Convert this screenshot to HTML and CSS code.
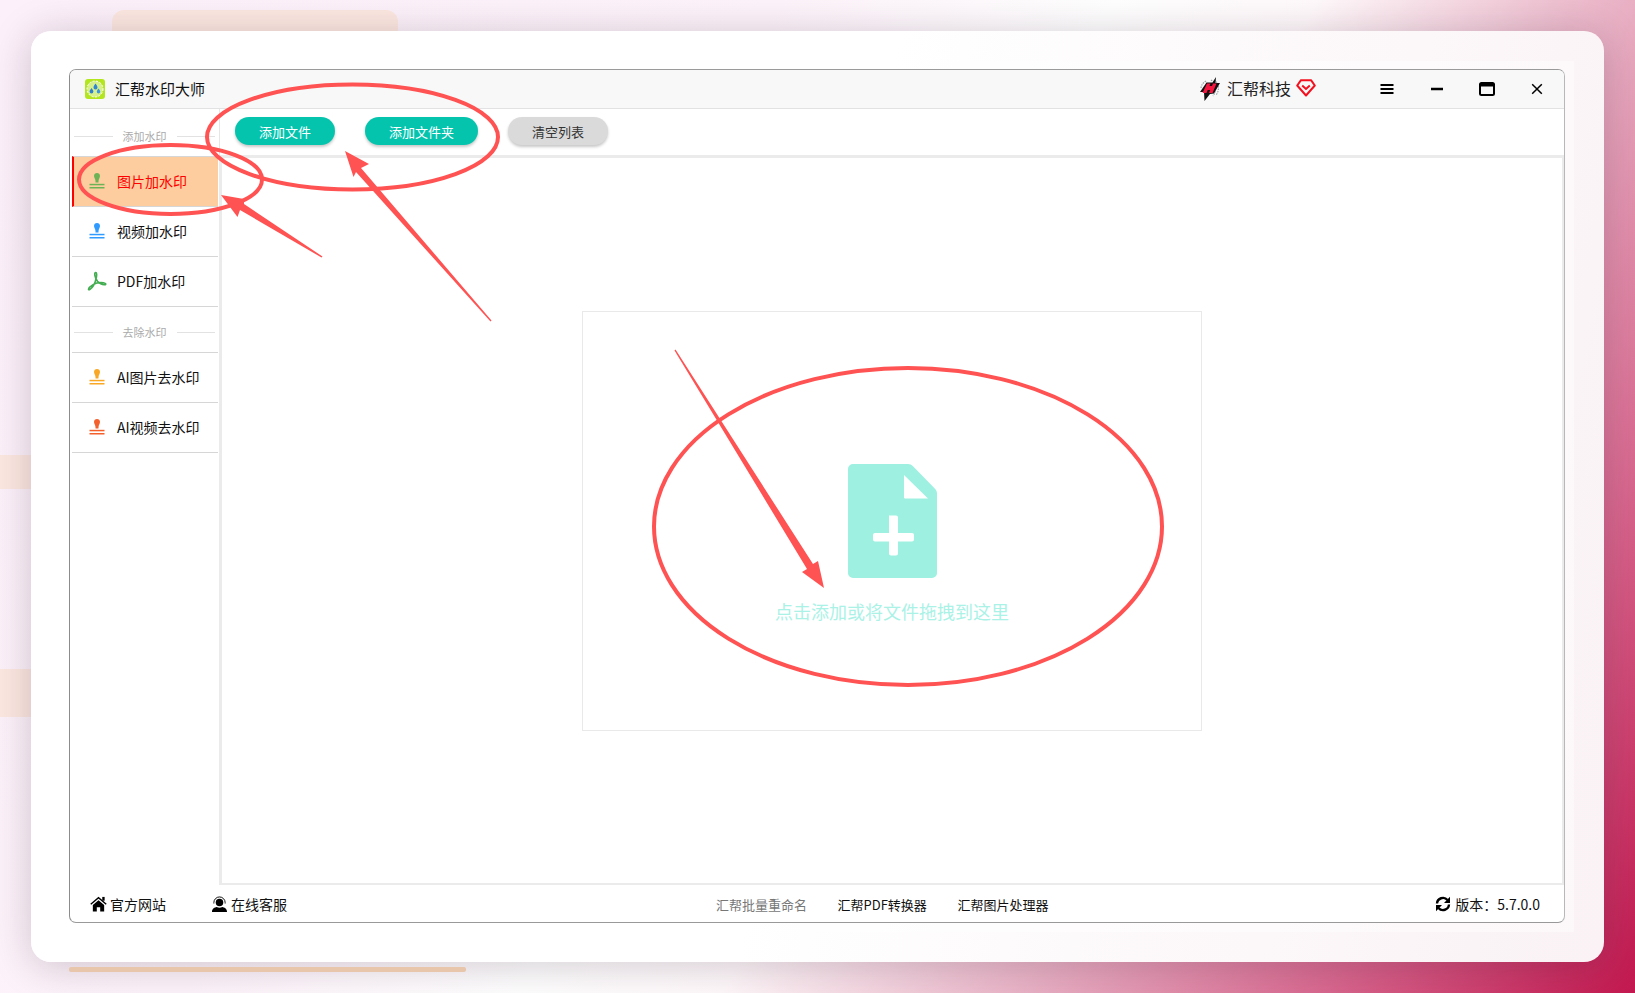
FILE: index.html
```html
<!DOCTYPE html>
<html lang="zh-CN">
<head>
<meta charset="utf-8">
<title>汇帮水印大师</title>
<link rel="stylesheet" href="styles.css">
</head>
<body>
<svg width="0" height="0" class="defs">
  <defs>
    <symbol id="stamp" viewBox="0 0 16 16">
      <path fill="currentColor" d="M8 0C6.2 0 5 1.3 5 3c0 1.900 1.500 2.800 1.500 5.300V9.500h3V8.300C9.500 5.800 11 4.900 11 3c0-1.700-1.200-3-3-3z"/>
      <rect fill="currentColor" x="0.500" y="10.800" width="15" height="1.500"/>
      <rect fill="currentColor" x="0.500" y="14" width="15" height="1.500"/>
    </symbol>
  </defs>
</svg>
<div class="decor decor-top"></div>
<div class="decor decor-left-a"></div>
<div class="decor decor-left-b"></div>
<div class="decor decor-bottom"></div>

<main class="card">
  <div class="frame">
    <div class="window">
      <header class="titlebar">
        <svg class="app-icon" viewBox="0 0 20 20">
          <rect width="20" height="20" rx="3" fill="#b3e61f"/>
          <circle cx="10" cy="10" r="8" fill="#d7f08c" stroke="#fff" stroke-width="1" stroke-dasharray="2 1.500"/>
          <path fill="#2f86d6" d="M10.500 4.500c1.300 1.900 2 2.900 2 3.900a2 2 0 0 1-4 0c0-1 .7-2 2-3.900z"/>
          <path fill="#2f7fd0" d="M6.500 9c1.200 1.700 1.900 2.600 1.900 3.600a1.900 1.900 0 0 1-3.800 0c0-1 .7-1.900 1.900-3.600z"/>
          <path fill="#3a95e0" d="M13.500 9.500c1.100 1.500 1.700 2.400 1.700 3.200a1.700 1.700 0 0 1-3.400 0c0-.8.6-1.700 1.700-3.200z"/>
        </svg>
        <span class="app-name">汇帮水印大师</span>
        <div class="brand">
          <svg class="brand-logo" viewBox="0 0 22 24">
            <path fill="none" stroke="#9aa5a5" stroke-width="1.200" stroke-dasharray="1.500 1" d="M15 3c5 3 6 10 2 15M12 3c5 3 6 11 2 16M7 4C4 6 2 8 2 12"/>
            <path fill="#111" d="M17 0l-3.500 5.500h-6L1 15h4L5.500 24l5.500-7 4-.5L21 6h-4.500z"/>
            <path fill="#f5163f" d="M8 6.500h3.500L10.500 9H13l1-2.500h3.500L13.500 16H10l1.200-3H8.700L7.500 16H3.500z"/>
          </svg>
          <span class="brand-name">汇帮科技</span>
          <svg class="brand-gem" viewBox="0 0 20 18">
            <path fill="none" stroke="#f4101e" stroke-width="2" stroke-linejoin="round" d="M5 1.200h10l3.800 5.300L10 16.500 1.200 6.500z"/>
            <path fill="none" stroke="#f4101e" stroke-width="2" d="M6.200 6.500L10 10l3.800-3.500"/>
          </svg>
        </div>
        <div class="win-controls">
          <button class="win-btn" type="button" aria-label="菜单">
            <svg width="14" height="12" viewBox="0 0 14 12"><path stroke="#000" stroke-width="2" d="M0.500 2h13M0.500 6h13M0.500 10h13"/></svg>
          </button>
          <button class="win-btn" type="button" aria-label="最小化">
            <svg width="14" height="12" viewBox="0 0 14 12"><path stroke="#000" stroke-width="2.400" d="M1 6h12"/></svg>
          </button>
          <button class="win-btn" type="button" aria-label="最大化">
            <svg width="16" height="14" viewBox="0 0 16 14"><rect x="1" y="1" width="14" height="12" rx="1.500" fill="none" stroke="#000" stroke-width="2"/><rect x="1" y="1" width="14" height="3.500" fill="#000"/></svg>
          </button>
          <button class="win-btn" type="button" aria-label="关闭">
            <svg width="12" height="12" viewBox="0 0 12 12"><path stroke="#000" stroke-width="1.500" d="M1.200 1.200l9.600 9.600M10.800 1.200l-9.600 9.600"/></svg>
          </button>
        </div>
      </header>

      <div class="body">
        <nav class="sidebar">
          <div class="sep sep-first"><span>添加水印</span></div>
          <a class="item item-top item-active">
            <span class="item-icon c-green"><svg class="stamp"><use href="#stamp"/></svg></span>图片加水印
          </a>
          <a class="item">
            <span class="item-icon c-blue"><svg class="stamp"><use href="#stamp"/></svg></span>视频加水印
          </a>
          <a class="item">
            <span class="item-icon">
              <svg class="pdf" viewBox="0 0 20 20"><path fill="none" stroke="#43ad52" stroke-width="1.600" stroke-linejoin="round" d="M8.800 1.500C7 1.500 7.500 6.500 10.500 10.200 13 13 16.500 14 18.500 13.600 19.500 13 18 11.500 14 11.500 8 11.500 2 15.500 1.500 18.200 1.500 19.500 4 18.500 6.500 14.500 9 10.500 10.800 1.500 8.800 1.500z"/></svg>
            </span>PDF加水印
          </a>
          <div class="sep"><span>去除水印</span></div>
          <a class="item item-top">
            <span class="item-icon c-orange"><svg class="stamp"><use href="#stamp"/></svg></span>AI图片去水印
          </a>
          <a class="item">
            <span class="item-icon c-red"><svg class="stamp"><use href="#stamp"/></svg></span>AI视频去水印
          </a>
        </nav>

        <section class="content">
          <div class="toolbar">
            <button class="btn btn-primary btn-file" type="button">添加文件</button>
            <button class="btn btn-primary btn-folder" type="button">添加文件夹</button>
            <button class="btn btn-muted btn-file" type="button">清空列表</button>
          </div>
          <div class="panel">
            <div class="dropzone">
              <svg class="file-icon" viewBox="0 0 89 114">
                <path fill="#9ef0e1" d="M5 0h55c2 0 3.500.7 5 2.200l21.500 22c1.700 1.700 2.500 3.300 2.500 5.300V109a5 5 0 0 1-5 5H5a5 5 0 0 1-5-5V5a5 5 0 0 1 5-5z"/>
                <path fill="#fff" d="M56 11l24 23.500H57a1 1 0 0 1-1-1z"/>
                <path fill="#fff" d="M41 51.500h7a2 2 0 0 1 2 2V69h14a2 2 0 0 1 2 2v4.500a2 2 0 0 1-2 2H50v12a2 2 0 0 1-2 2h-5a2 2 0 0 1-2-2v-12H27a2 2 0 0 1-2-2V71a2 2 0 0 1 2-2h14z"/>
              </svg>
              <p class="drop-text">点击添加或将文件拖拽到这里</p>
            </div>
          </div>
        </section>
      </div>

      <footer class="footer">
        <div class="foot-left">
          <a class="foot-link">
            <svg class="foot-icon" viewBox="0 0 18 16"><path fill="none" stroke="#000" stroke-width="1.500" d="M.8 8.200L9 1.300l8.200 6.900"/><rect x="13" y=".5" width="2.500" height="4"/><path d="M3 9l6-5 6 5v7h-4.200v-4.500H7.200V16H3z"/></svg>官方网站
          </a>
          <a class="foot-link">
            <svg class="foot-icon" viewBox="0 0 17 17"><path fill="none" stroke="#000" stroke-width="1" d="M2.500 8V7a6 6 0 0 1 12 0v1"/><circle cx="8.500" cy="7" r="4"/><path d="M0.500 17c0-3.500 3-5 5-5.300 1.800 1 4.200 1 6 0 2 .3 5 1.800 5 5.300z"/></svg>在线客服
          </a>
        </div>
        <div class="foot-center">
          <a class="foot-tool foot-tool-muted">汇帮批量重命名</a>
          <a class="foot-tool">汇帮PDF转换器</a>
          <a class="foot-tool">汇帮图片处理器</a>
        </div>
        <div class="foot-version">
          <svg class="foot-icon refresh" viewBox="0 0 16 16"><path fill="none" stroke="#000" stroke-width="2.400" d="M2 7.500A6 6 0 0 1 12.500 4M14 8.500A6 6 0 0 1 3.500 12"/><path d="M15 .8V7H9zM1 15.200V9h6z"/></svg>版本：5.7.0.0
        </div>
      </footer>
    </div>
  </div>
</main>

<svg class="annotations" viewBox="0 0 1635 993" aria-hidden="true">
  <g class="rings">
    <ellipse cx="352.500" cy="137" rx="145.500" ry="52.500"/>
    <ellipse cx="170.500" cy="179.500" rx="91.500" ry="34.500"/>
    <ellipse cx="908" cy="526.500" rx="254" ry="158.500"/>
  </g>
  <g class="arrows">
    <polygon points="322.500,256.500 321.500,257.500 240,210 237.500,217 221,195 244,199 244,204"/>
    <polygon points="491.500,320.500 490.500,321.500 356,172 353.500,177 345,151 369,164 361,168"/>
    <polygon points="675.500,349.500 674.500,350.500 807,569 802,572 824,588 818,561 813,564"/>
  </g>
</svg>
</body>
</html>
```
FILE: styles.css
```css
* { box-sizing: border-box; }

html, body { margin: 0; padding: 0; }

body {
  position: relative;
  width: 1635px;
  height: 993px;
  overflow: hidden;
  font-family: "Noto Sans CJK SC", "Liberation Sans", sans-serif;
  color: #000;
  background: linear-gradient(121deg, #fcf0fa 0%, #fdf3fa 35%, #fff 50%, #fff9fb 59%, #e9b0c4 73%, #d9688f 86%, #c2184f 100%);
}

.defs { position: absolute; }

.decor { position: absolute; background: #fde8e1; }
.decor-top { left: 112px; top: 10px; width: 286px; height: 40px; border-radius: 12px; }
.decor-left-a { left: 0; top: 455px; width: 40px; height: 34px; }
.decor-left-b { left: 0; top: 669px; width: 40px; height: 48px; }
.decor-bottom { left: 69px; top: 967px; width: 397px; height: 5px; border-radius: 2px; background: #e8c6ab; z-index: 2; }

.card {
  position: relative;
  z-index: 1;
  display: flex;
  width: 1573px;
  height: 931px;
  margin: 31px 0 0 31px;
  padding: 30px;
  border-radius: 20px;
  background: linear-gradient(100deg, #fff 0%, #fff 50%, #faf2f5 100%);
  box-shadow: 0 4px 40px rgba(40, 20, 40, .22);
}

.frame {
  flex: 1;
  display: flex;
  padding: 8px 9px 9px 8px;
  background: rgba(255, 255, 255, .45);
}

.window {
  flex: 1;
  display: flex;
  flex-direction: column;
  overflow: hidden;
  border: 1px solid #8c8c8c;
  border-top-color: #9a9a9a;
  border-right-color: #b8b8b8;
  border-bottom-color: #999;
  border-radius: 7px;
  background: #fff;
}

.titlebar {
  flex: 0 0 39px;
  display: flex;
  align-items: center;
  padding-left: 15px;
  border-bottom: 1px solid #e2e2e2;
  background: #f8f8f8;
}

.app-icon { width: 20px; height: 20px; margin-right: 10px; }
.app-name { font-size: 15px; color: #111; padding-bottom: 2px; }

.brand { display: flex; align-items: center; margin-left: auto; }
.brand-logo { width: 22px; height: 24px; margin-right: 6px; }
.brand-name { font-size: 16px; color: #222; padding-bottom: 2px; }
.brand-gem { width: 20px; height: 18px; margin-left: 5px; margin-top: -2px; }

.win-controls { display: flex; align-items: center; margin-left: 46px; padding-right: 2px; }
.win-btn {
  display: flex;
  align-items: center;
  justify-content: center;
  width: 50px;
  height: 38px;
  padding: 0;
  border: 0;
  background: none;
}

.body { flex: 1; display: flex; min-height: 0; }

.sidebar { flex: 0 0 149px; display: flex; flex-direction: column; padding-left: 2px; }

.sep {
  flex: 0 0 45px;
  display: flex;
  align-items: center;
  gap: 10px;
  padding: 5px 0 0 2px;
  margin-right: 4px;
  font-size: 11px;
  color: #aaa;
  white-space: nowrap;
}
.sep-first { flex-basis: 47px; padding-top: 7px; }
.sep::before, .sep::after { content: ""; flex: 1; height: 1px; background: #e2e2e2; }

.item {
  flex: 0 0 50px;
  display: flex;
  align-items: center;
  width: 146px;
  padding: 0 0 2px 15px;
  border-bottom: 1px solid #d6d6d6;
  font-size: 14px;
  color: #111;
}
.item-top { flex-basis: 51px; border-top: 1px solid #d6d6d6; }
.item-active { padding-left: 13px; border-left: 2px solid #f00; background: #fecd9f; color: #f00; }
.item-icon { display: flex; justify-content: center; width: 20px; margin-right: 10px; }
.stamp { width: 16px; height: 16px; }
.pdf { width: 20px; height: 20px; }
.c-green { color: #6cb356; }
.c-blue { color: #2f9bff; }
.c-orange { color: #f9a825; }
.c-red { color: #f4602c; }

.content { flex: 1; display: flex; flex-direction: column; min-width: 0; }

.toolbar {
  flex: 0 0 46px;
  display: flex;
  gap: 30px;
  padding: 8px 0 0 15px;
  border-left: 1px solid #e6e6e6;
}

.btn {
  height: 28px;
  padding: 0;
  border: 0;
  border-radius: 14px;
  font-family: inherit;
  font-size: 13px;
  box-shadow: 0 2px 3px rgba(0, 0, 0, .22);
}
.btn-file { width: 100px; }
.btn-folder { width: 113px; }
.btn-primary { background: #05c4ae; color: #fff; }
.btn-muted { background: #dadada; color: #333; }

.panel {
  flex: 1;
  display: flex;
  align-items: center;
  justify-content: center;
  border: solid #ebebeb;
  border-width: 3px 2px 2px 3px;
}

.dropzone {
  display: flex;
  flex-direction: column;
  align-items: center;
  width: 620px;
  height: 420px;
  padding-top: 152px;
  border: 1px solid #e9e9e9;
}
.file-icon { width: 89px; height: 114px; }
.drop-text { margin: 21px 0 0; font-size: 18px; line-height: 24px; color: #aaf2e6; }

.footer {
  flex: 0 0 37px;
  display: flex;
  align-items: center;
  padding: 1px 24px 0 20px;
  font-size: 14px;
}
.foot-left { display: flex; gap: 45px; width: 626px; }
.foot-link { display: flex; align-items: center; gap: 3px; color: #111; }
.foot-icon { width: 17px; height: 16px; }
.foot-center { display: flex; gap: 30.500px; font-size: 13px; color: #111; }
.foot-tool-muted { color: #777; }
.foot-version { display: flex; align-items: center; gap: 4px; margin-left: auto; color: #111; }
.refresh { width: 16px; }

.annotations {
  position: absolute;
  left: 0;
  top: 0;
  width: 1635px;
  height: 993px;
  z-index: 3;
  pointer-events: none;
}
.rings ellipse { fill: none; stroke: #ff5252; stroke-width: 4; }
.arrows polygon { fill: #ff5252; }
```
